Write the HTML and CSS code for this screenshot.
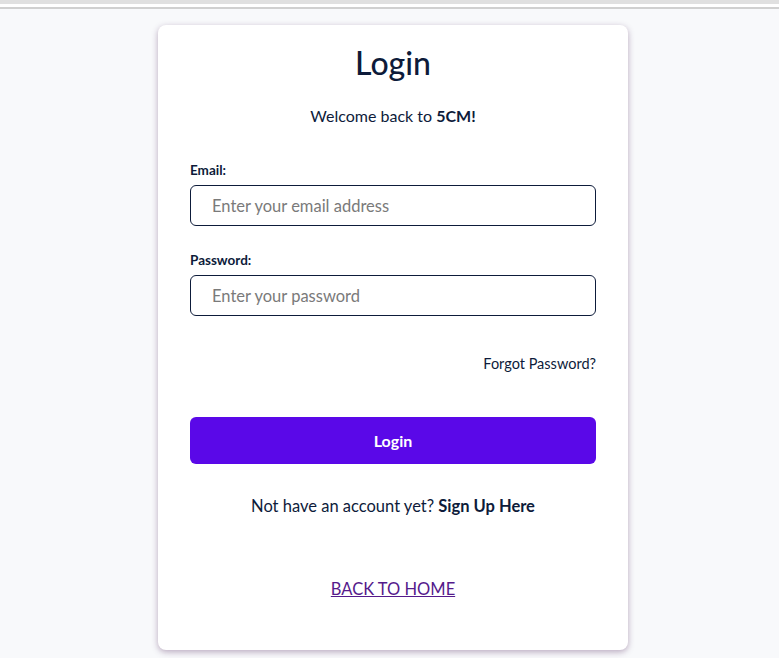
FILE: index.html
```html
<!DOCTYPE html>
<html lang="en">
<head>
<meta charset="utf-8">
<title>Login</title>
<link rel="stylesheet" href="styles.css">
</head>
<body>
<div class="topbar"></div>
<main class="page">
  <div class="card">
    <h1 class="title">Login</h1>
    <p class="welcome">Welcome back to <strong>5CM!</strong></p>
    <form class="form">
      <label class="label" for="email">Email:</label>
      <input class="input" id="email" type="email" placeholder="Enter your email address">
      <label class="label label-pw" for="pw">Password:</label>
      <input class="input" id="pw" type="password" placeholder="Enter your password">
      <div class="forgot-row"><a class="forgot" href="#">Forgot Password?</a></div>
      <button class="btn" type="button">Login</button>
    </form>
    <p class="signup">Not have an account yet? <a class="signup-link" href="#">Sign Up Here</a></p>
    <div class="back-row"><a class="back" href="#">BACK TO HOME</a></div>
  </div>
</main>
</body>
</html>
```

FILE: styles.css
```css
* { box-sizing: border-box; }
html, body { margin: 0; padding: 0; }
body {
  font-family: "Lato", "Noto Sans", sans-serif;
  background: #f8f9fb;
  color: #0d1b3a;
  height: 658px;
  overflow: hidden;
}
.topbar {
  height: 9px;
  background: #ffffff;
  border-top: 4px solid #e0e0e0;
  border-bottom: 2px solid #d0d0d0;
}
.page {
  display: flex;
  justify-content: center;
  padding-top: 16px;
  padding-left: 7px;
}
.card {
  width: 470px;
  height: 625px;
  background: #fff;
  border-radius: 8px;
  box-shadow: 0 2px 6px rgba(90, 50, 100, 0.4);
  padding: 42px 32px 0;
  display: flex;
  flex-direction: column;
}
.title {
  margin: 0;
  font-size: 32px;
  line-height: 42px;
  font-weight: 500;
  text-align: center;
  color: #0d1b3a;
  margin-top: -25px;
}
.welcome {
  margin: 21px 0 0;
  font-size: 16px;
  line-height: 22px;
  text-align: center;
}
.welcome strong { font-weight: 700; }
.form { display: flex; flex-direction: column; margin-top: 34px; }
.label {
  font-size: 13.5px;
  line-height: 18px;
  font-weight: 700;
  margin-bottom: 6px;
}
.label-pw { margin-top: 25px; }
.input {
  height: 41px;
  border: 1px solid #0d1b3a;
  border-radius: 6px;
  padding: 0 21px;
  font-family: inherit;
  font-size: 16.5px;
  color: #0d1b3a;
  background: #fff;
}
.input::placeholder { color: #7a7a7a; }
.forgot-row { display: flex; justify-content: flex-end; margin-top: 38px; }
.forgot {
  font-size: 14.5px;
  line-height: 20px;
  color: #0d1b3a;
  text-decoration: none;
}
.btn {
  margin-top: 43px;
  height: 47px;
  border: none;
  border-radius: 6px;
  background: #5a08e8;
  color: #fff;
  font-family: inherit;
  font-size: 16px;
  font-weight: 700;
}
.signup {
  margin: 31px 0 0;
  font-size: 16.5px;
  line-height: 22px;
  text-align: center;
}
.signup-link { color: #0d1b3a; font-weight: 700; text-decoration: none; }
.back-row { display: flex; justify-content: center; margin-top: 61px; }
.back {
  font-size: 16.5px;
  line-height: 22px;
  color: #551a8b;
  text-decoration: underline;
}
```
